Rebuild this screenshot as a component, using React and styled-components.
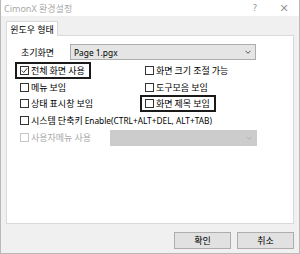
import React from 'react';
import styled, { createGlobalStyle } from 'styled-components';

const GlobalStyle = createGlobalStyle`
  html, body {
    margin: 0;
    padding: 0;
    background: #ffffff;
  }
  body {
    font-family: "Noto Sans CJK KR", "Noto Sans", sans-serif;
    font-size: 9px;
    color: #000;
  }
`;

const Window = styled.div`
  width: 300px;
  height: 254px;
  box-sizing: border-box;
  display: flex;
  flex-direction: column;
  border: 1px solid #b9b9b9;
  border-top: none;
  background: #f0f0f0;
`;

const TitleBar = styled.div`
  height: 16px;
  flex-shrink: 0;
  background: #ffffff;
  display: flex;
  align-items: center;
  padding: 0 0 0 3px;
  color: #a8a8a8;
  font-size: 9px;
`;

const Title = styled.span`
  flex: 1;
  font-family: "Noto Sans", "Noto Sans CJK KR", sans-serif;
`;

const TitleButton = styled.span`
  width: ${(p) => p.w}px;
  text-align: center;
  color: #9a9a9a;
  font-family: "DejaVu Sans", sans-serif;
  font-size: ${(p) => p.size}px;
`;

const Body = styled.div`
  flex: 1;
  display: flex;
  flex-direction: column;
  padding: 5px 5px 0 5px;
`;

const TabStrip = styled.div`
  display: flex;
  height: 15px;
  margin-bottom: -1px;
`;

const Tab = styled.div`
  width: 52px;
  box-sizing: border-box;
  background: #ffffff;
  border: 1px solid #d9d9d9;
  border-bottom: none;
  display: flex;
  align-items: center;
  justify-content: center;
  white-space: nowrap;
  position: relative;
  z-index: 1;
`;

const Panel = styled.div`
  height: 189px;
  box-sizing: border-box;
  background: #ffffff;
  border: 1px solid #d9d9d9;
  padding: 8px 0 0 13px;
  display: flex;
  flex-direction: column;
`;

const FieldRow = styled.div`
  display: flex;
  align-items: center;
  height: 16px;
`;

const FieldLabel = styled.span`
  width: 49px;
  padding-left: 1px;
`;

const Select = styled.div`
  width: ${(p) => p.width}px;
  height: 16px;
  box-sizing: border-box;
  background: ${(p) => (p.disabled ? '#cccccc' : '#e5e5e5')};
  border: 1px solid ${(p) => (p.disabled ? '#cccccc' : '#adadad')};
  display: flex;
  align-items: center;
  justify-content: space-between;
  padding: 0 4px 0 3px;
  font-family: "Noto Sans", sans-serif;
  font-size: 8.4px;
  color: #000;
`;

const Chevron = ({ color }) => (
  <svg width="6" height="4" viewBox="0 0 6 4">
    <path d="M0.5 0.8 L3 3.3 L5.5 0.8" fill="none" stroke={color} strokeWidth="1" />
  </svg>
);

const CheckGrid = styled.div`
  display: grid;
  grid-template-columns: 125px 1fr;
  grid-auto-rows: 16.5px;
  margin-top: 2.5px;
`;

const CheckItem = styled.label`
  display: flex;
  align-items: center;
  gap: 2px;
  grid-column: ${(p) => (p.wide ? '1 / span 2' : 'auto')};
  color: ${(p) => (p.disabled ? '#a9a9a9' : '#000')};
  white-space: nowrap;
  justify-self: start;
  ${(p) =>
    p.marked &&
    `
    outline: 2px solid #1a1a1a;
    padding: 0 4px 0 3px;
    margin-left: -3px;
    height: 13px;
    align-self: center;
  `}
`;

const Box = styled.span`
  width: 9px;
  height: 9px;
  box-sizing: border-box;
  border: 1px solid ${(p) => (p.disabled ? '#c6c6c6' : '#333333')};
  background: #ffffff;
  display: flex;
  align-items: center;
  justify-content: center;
  flex-shrink: 0;
`;

const Tick = () => (
  <svg width="7" height="7" viewBox="0 0 7 7">
    <path d="M0.8 3.6 L2.7 5.5 L6.3 1.2" fill="none" stroke="#333" strokeWidth="1" />
  </svg>
);

const Mixed = styled.span`
  font-family: "Noto Sans", "Noto Sans CJK KR", sans-serif;
  font-size: 8.3px;
`;

const DisabledRow = styled.div`
  display: flex;
  align-items: center;
  height: 16px;
  margin-top: 1px;
`;

const DisabledLabel = styled.div`
  width: 90px;
`;

const ButtonBar = styled.div`
  display: flex;
  justify-content: flex-end;
  gap: 6px;
  padding: 8px 0 0 0;
`;

const Button = styled.button`
  width: 57px;
  height: 17px;
  box-sizing: border-box;
  background: #e1e1e1;
  border: 1px solid #adadad;
  border-radius: 0;
  padding: 0;
  font-family: "Noto Sans CJK KR", sans-serif;
  font-size: 9px;
  color: #000;
  cursor: pointer;
`;

const Check = ({ checked, disabled, marked, wide, children }) => (
  <CheckItem disabled={disabled} marked={marked} wide={wide}>
    <Box disabled={disabled}>{checked && <Tick />}</Box>
    <span>{children}</span>
  </CheckItem>
);

const App = () => (
  <>
    <GlobalStyle />
    <Window>
      <TitleBar>
        <Title>CimonX 환경설정</Title>
        <TitleButton w={28} size={9}>?</TitleButton>
        <TitleButton w={30} size={11}>✕</TitleButton>
      </TitleBar>
      <Body>
        <TabStrip>
          <Tab>윈도우 형태</Tab>
        </TabStrip>
        <Panel>
          <FieldRow>
            <FieldLabel>초기화면</FieldLabel>
            <Select width={186}>
              Page 1.pgx
              <Chevron color="#555" />
            </Select>
          </FieldRow>
          <CheckGrid>
            <Check checked marked>전체 화면 사용</Check>
            <Check>화면 크기 조절 가능</Check>
            <Check>메뉴 보임</Check>
            <Check>도구모음 보임</Check>
            <Check>상태 표시창 보임</Check>
            <Check marked>화면 제목 보임</Check>
            <Check wide>
              시스템 단축키 <Mixed>Enable(CTRL+ALT+DEL, ALT+TAB)</Mixed>
            </Check>
          </CheckGrid>
          <DisabledRow>
            <DisabledLabel>
              <Check disabled>사용자메뉴 사용</Check>
            </DisabledLabel>
            <Select width={147} disabled>
              <span />
              <Chevron color="#b0b0b0" />
            </Select>
          </DisabledRow>
        </Panel>
        <ButtonBar>
          <Button>확인</Button>
          <Button>취소</Button>
        </ButtonBar>
      </Body>
    </Window>
  </>
);

export default App;
